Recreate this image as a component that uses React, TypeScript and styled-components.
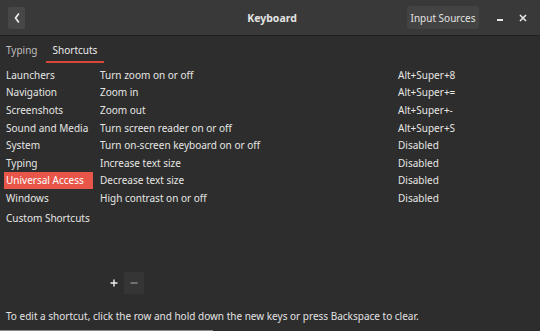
import React from "react";
import styled, { createGlobalStyle } from "styled-components";

const Global = createGlobalStyle`
  html, body { margin: 0; padding: 0; background: #2d2d2d; }
  body { font-family: "Noto Sans", "Open Sans", sans-serif; }
`;

const Window = styled.div`
  width: 540px;
  height: 331px;
  background: #2d2d2d;
  color: #e6e6e4;
  display: flex;
  flex-direction: column;
  font-size: 10px;
  overflow: hidden;
`;

const HeaderBar = styled.header`
  height: 35px;
  flex: none;
  background: #393939;
  border-bottom: 1px solid #202020;
  display: grid;
  grid-template-columns: 1fr auto 1fr;
  align-items: center;
  padding: 0 6px 0 8px;
`;

const HeaderLeft = styled.div`
  display: flex;
  align-items: center;
`;

const HeaderRight = styled.div`
  display: flex;
  align-items: center;
  justify-content: flex-end;
`;

const BackButton = styled.div`
  width: 17px;
  height: 22px;
  background: #474747;
  border-radius: 2px;
  display: flex;
  align-items: center;
  justify-content: center;
`;

const Title = styled.div`
  font-weight: bold;
  font-size: 10.5px;
  color: #e4e4e4;
  padding-left: 2px;
`;

const HeaderButton = styled.div`
  height: 23px;
  width: 72px;
  box-sizing: border-box;
  background: #434343;
  border-radius: 2px;
  display: flex;
  align-items: center;
  justify-content: center;
  color: #e2e2e2;
  margin-right: 9px;
`;

const WinControl = styled.div`
  width: 23px;
  height: 22px;
  display: flex;
  align-items: center;
  justify-content: center;
`;

const TabRow = styled.nav`
  height: 27px;
  display: flex;
  align-items: stretch;
  flex: none;
`;

const Tab = styled.div<{ $active?: boolean }>`
  display: flex;
  align-items: center;
  padding: 1px ${(p) => (p.$active ? "7px" : "6px")} 0;
  color: ${(p) => (p.$active ? "#ececec" : "#bdbdbd")};
  box-shadow: ${(p) => (p.$active ? "inset 0 -2px 0 #d8453b" : "none")};
  margin-left: ${(p) => (p.$active ? "2px" : "0")};
`;

const Content = styled.div`
  flex: 1;
  display: grid;
  grid-template-columns: 100px 298px 1fr;
  padding-top: 3px;
`;

const SectionList = styled.div`
  display: flex;
  flex-direction: column;
  padding-left: 4px;
`;

const SectionItem = styled.div<{ $selected?: boolean; $extra?: boolean }>`
  height: 17.6px;
  width: 89px;
  box-sizing: border-box;
  padding-left: 2px;
  display: flex;
  align-items: center;
  white-space: nowrap;
  background: ${(p) => (p.$selected ? "#e8564a" : "transparent")};
  color: ${(p) => (p.$selected ? "#ffffff" : "#e6e6e4")};
  margin-top: ${(p) => (p.$extra ? "2px" : "0")};
`;

const Column = styled.div`
  display: flex;
  flex-direction: column;
`;

const Cell = styled.div`
  height: 17.6px;
  display: flex;
  align-items: center;
  white-space: nowrap;
`;

const Toolbar = styled.div`
  display: flex;
  padding-left: 104px;
  height: 22px;
  flex: none;
  margin-bottom: 11px;
`;

const ToolButton = styled.div<{ $filled?: boolean }>`
  width: 20px;
  height: 22px;
  background: ${(p) => (p.$filled ? "#353535" : "transparent")};
  display: flex;
  align-items: center;
  justify-content: center;
`;

const Footer = styled.div`
  height: 22px;
  flex: none;
  display: flex;
  align-items: center;
  padding-left: 6px;
  margin-bottom: 3px;
  color: #e2e2e2;
`;

const BottomEdge = styled.div`
  height: 1px;
  flex: none;
  display: flex;
`;

const EdgeLine = styled.div`
  width: 213px;
  background: #8a8a8a;
`;

const sections = [
  "Launchers",
  "Navigation",
  "Screenshots",
  "Sound and Media",
  "System",
  "Typing",
  "Universal Access",
  "Windows",
];

const shortcuts: [string, string][] = [
  ["Turn zoom on or off", "Alt+Super+8"],
  ["Zoom in", "Alt+Super+="],
  ["Zoom out", "Alt+Super+-"],
  ["Turn screen reader on or off", "Alt+Super+S"],
  ["Turn on-screen keyboard on or off", "Disabled"],
  ["Increase text size", "Disabled"],
  ["Decrease text size", "Disabled"],
  ["High contrast on or off", "Disabled"],
];

export default function App() {
  return (
    <>
      <Global />
      <Window>
        <HeaderBar>
          <HeaderLeft>
            <BackButton>
              <svg width="8" height="12" viewBox="0 0 8 12">
                <path d="M5.5 2 L2.5 6 L5.5 10" stroke="#f2f2f2" strokeWidth="1.6" fill="none" strokeLinecap="round" strokeLinejoin="round" />
              </svg>
            </BackButton>
          </HeaderLeft>
          <Title>Keyboard</Title>
          <HeaderRight>
            <HeaderButton>Input Sources</HeaderButton>
            <WinControl>
              <svg width="10" height="10" viewBox="0 0 10 10">
                <rect x="2" y="6" width="6" height="2" fill="#e6e6e6" />
              </svg>
            </WinControl>
            <WinControl>
              <svg width="10" height="10" viewBox="0 0 10 10">
                <path d="M2 2 L8 8 M8 2 L2 8" stroke="#e6e6e6" strokeWidth="1.6" />
              </svg>
            </WinControl>
          </HeaderRight>
        </HeaderBar>
        <TabRow>
          <Tab>Typing</Tab>
          <Tab $active>Shortcuts</Tab>
        </TabRow>
        <Content>
          <SectionList>
            {sections.map((s) => (
              <SectionItem key={s} $selected={s === "Universal Access"}>
                {s}
              </SectionItem>
            ))}
            <SectionItem $extra>Custom Shortcuts</SectionItem>
          </SectionList>
          <Column>
            {shortcuts.map(([d]) => (
              <Cell key={d}>{d}</Cell>
            ))}
          </Column>
          <Column>
            {shortcuts.map(([d, k]) => (
              <Cell key={d}>{k}</Cell>
            ))}
          </Column>
        </Content>
        <Toolbar>
          <ToolButton>
            <svg width="10" height="10" viewBox="0 0 10 10">
              <path d="M5 1.5 V8.5 M1.5 5 H8.5" stroke="#f0f0f0" strokeWidth="1.4" />
            </svg>
          </ToolButton>
          <ToolButton $filled>
            <svg width="10" height="10" viewBox="0 0 10 10">
              <path d="M1.5 5 H8.5" stroke="#8c8c8c" strokeWidth="1.4" />
            </svg>
          </ToolButton>
        </Toolbar>
        <Footer>
          To edit a shortcut, click the row and hold down the new keys or press Backspace to clear.
        </Footer>
        <BottomEdge>
          <EdgeLine />
        </BottomEdge>
      </Window>
    </>
  );
}
